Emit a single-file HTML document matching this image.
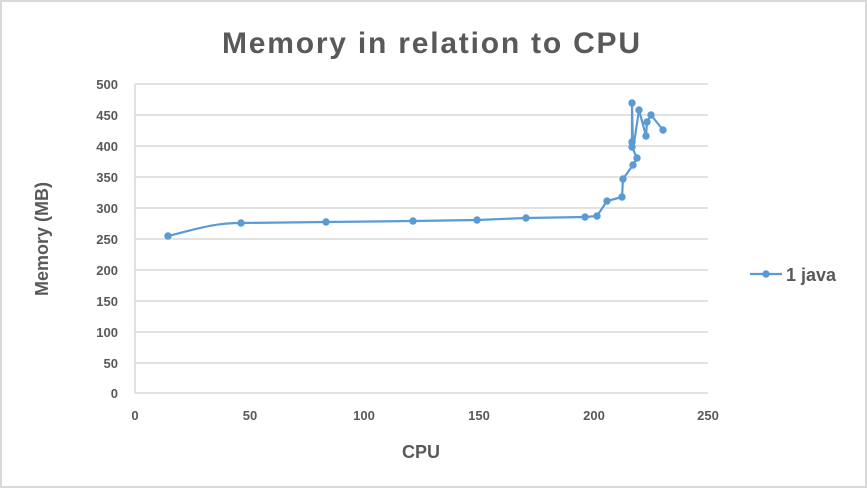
<!DOCTYPE html>
<html><head><meta charset="utf-8"><style>
html,body{margin:0;padding:0;background:#fff;}
svg{display:block;}
text{font-family:"Liberation Sans",sans-serif;fill:#595959;}
</style></head><body>
<svg width="867" height="488" viewBox="0 0 867 488" xmlns="http://www.w3.org/2000/svg">
<rect x="1" y="1" width="865" height="486" fill="#fff" stroke="#d9d9d9" stroke-width="2"/>
<text x="222" y="53" font-size="30" font-weight="bold" textLength="418" lengthAdjust="spacing">Memory in relation to  CPU</text>
<g stroke="#d9d9d9" stroke-width="1.5">
<line x1="135" y1="84" x2="708" y2="84"/><line x1="135" y1="115" x2="708" y2="115"/>
<line x1="135" y1="146" x2="708" y2="146"/><line x1="135" y1="177" x2="708" y2="177"/>
<line x1="135" y1="208" x2="708" y2="208"/><line x1="135" y1="239" x2="708" y2="239"/>
<line x1="135" y1="270" x2="708" y2="270"/><line x1="135" y1="301" x2="708" y2="301"/>
<line x1="135" y1="332" x2="708" y2="332"/><line x1="135" y1="363" x2="708" y2="363"/>
<line x1="135" y1="393" x2="708" y2="393"/><line x1="135" y1="84" x2="135" y2="393"/>
</g>
<g font-size="13" font-weight="bold" text-anchor="end">
<text x="118" y="89">500</text><text x="118" y="120">450</text><text x="118" y="151">400</text>
<text x="118" y="182">350</text><text x="118" y="213">300</text><text x="118" y="244">250</text>
<text x="118" y="275">200</text><text x="118" y="306">150</text><text x="118" y="337">100</text>
<text x="118" y="368">50</text><text x="118" y="398">0</text>
</g>
<g font-size="13" font-weight="bold" text-anchor="middle">
<text x="135" y="420">0</text><text x="250" y="420">50</text><text x="364" y="420">100</text>
<text x="479" y="420">150</text><text x="594" y="420">200</text><text x="708" y="420">250</text>
</g>
<text x="421" y="458" font-size="18" font-weight="bold" text-anchor="middle">CPU</text>
<text transform="translate(48,239) rotate(-90)" font-size="18" font-weight="bold" text-anchor="middle">Memory (MB)</text>
<path d="M168,236 C200,228 215,223 241,223 L326,222 413,221 477,220 526,218 585,217 597,216 607,201 622,197 623,179 633,165 637,158 632,147 632,142 632,103 633,150 639,110 646,136 647,122 651,115 663,130" fill="none" stroke="#5b9bd5" stroke-width="2.2" stroke-linejoin="round"/>
<g fill="#5b9bd5">
<circle cx="168" cy="236" r="3.7"/><circle cx="241" cy="223" r="3.7"/><circle cx="326" cy="222" r="3.7"/>
<circle cx="413" cy="221" r="3.7"/><circle cx="477" cy="220" r="3.7"/><circle cx="526" cy="218" r="3.7"/>
<circle cx="585" cy="217" r="3.7"/><circle cx="597" cy="216" r="3.7"/><circle cx="607" cy="201" r="3.7"/>
<circle cx="622" cy="197" r="3.7"/><circle cx="623" cy="179" r="3.7"/><circle cx="633" cy="165" r="3.7"/>
<circle cx="637" cy="158" r="3.7"/><circle cx="632" cy="147" r="3.7"/><circle cx="632" cy="142" r="3.7"/>
<circle cx="632" cy="103" r="3.7"/><circle cx="639" cy="110" r="3.7"/><circle cx="646" cy="136" r="3.7"/>
<circle cx="647" cy="122" r="3.7"/><circle cx="651" cy="115" r="3.7"/><circle cx="663" cy="130" r="3.7"/>
</g>
<line x1="750" y1="274" x2="782" y2="274" stroke="#5b9bd5" stroke-width="2.2"/>
<circle cx="766" cy="274" r="3.7" fill="#5b9bd5"/>
<text x="786" y="281" font-size="18" font-weight="bold">1 java</text>
</svg>
</body></html>
